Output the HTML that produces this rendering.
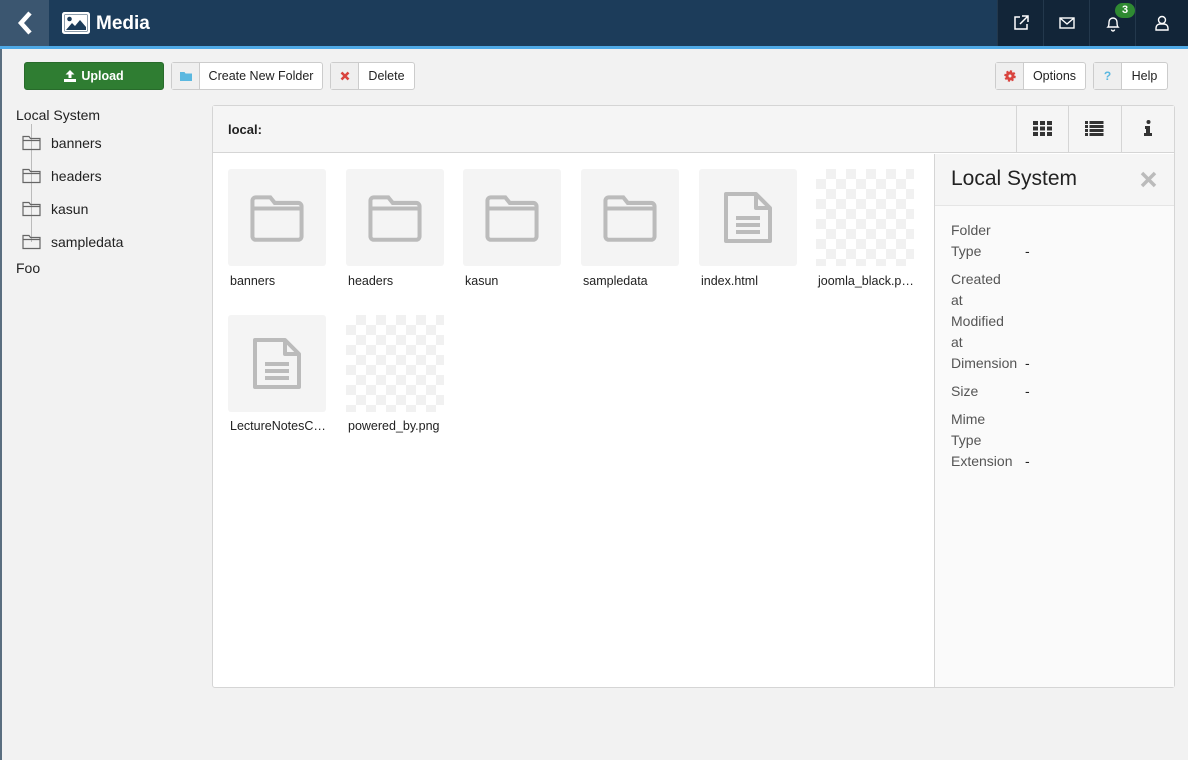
<!DOCTYPE html>
<html><head><meta charset="utf-8"><style>
*{box-sizing:border-box;margin:0;padding:0}
body{width:1188px;height:760px;background:#f2f2f2;font-family:"Liberation Sans",Arial,sans-serif;font-size:13px;color:#222;position:relative;overflow:hidden}
.abs{position:absolute}
#hdr{left:0;top:0;width:1188px;height:46px;background:#1c3c5a}
#line{left:0;top:46px;width:1188px;height:3px;background:#4ea9e6}
#back{left:0;top:0;width:49px;height:46px;background:#3b5670}
.ric{top:0;width:46px;height:46px;background:#122538;border-left:1px solid #23384c;display:flex;align-items:center;justify-content:center}
.btn{height:28px;border:1px solid #ccc;border-radius:3px;background:#fff;display:flex;align-items:stretch;font-size:12.5px}
.btn .ic{width:28px;background:#efefef;border-right:1px solid #ccc;display:flex;align-items:center;justify-content:center}
.btn .t{flex:1;display:flex;align-items:center;justify-content:center}
.tree{font-size:14px;color:#222}
.thumb{width:98px;height:97px;background:#f4f4f4;border-radius:3px;display:flex;align-items:center;justify-content:center}
.chk{background-color:#fff;background-image:linear-gradient(45deg,#f1f1f1 25%,transparent 25%,transparent 75%,#f1f1f1 75%),linear-gradient(45deg,#f1f1f1 25%,transparent 25%,transparent 75%,#f1f1f1 75%);background-size:20px 20px;background-position:0 0,10px 10px}
.lbl{font-size:12.5px;width:98px;white-space:nowrap;overflow:hidden;text-overflow:ellipsis;padding-left:2px}
.inf{font-size:14px;color:#555;line-height:21px}
.dash{color:#222}
</style></head><body>
<div id="hdr" class="abs"></div>
<div id="back" class="abs"><svg width="49" height="46"><path d="M30 13 L21 23 L30 33" stroke="#fff" stroke-width="4.5" fill="none"/></svg></div>
<svg class="abs" style="left:61px;top:11px" width="30" height="24"><rect x="1.5" y="1.5" width="27" height="21" rx="2" fill="#fff" stroke="#fff" stroke-width="1"/><rect x="3.5" y="3.5" width="23" height="17" fill="#1c3c5a"/><rect x="4" y="4" width="22" height="16" fill="#fff"/><circle cx="8.5" cy="8" r="2.3" fill="#1c3c5a"/><path d="M5 19 L11 12 L14 15 L19 9 L25 16 L25 19 Z" fill="#1c3c5a"/></svg>
<div class="abs" style="left:96px;top:13px;color:#fff;font-size:19px;font-weight:bold">Media</div>
<div class="ric abs" style="left:997px"><svg width="18" height="18" fill="none" stroke="#fff" stroke-width="1.5"><path d="M8 3H3v12h12v-5"/><path d="M10 2h6v6M16 2L8 10"/></svg></div>
<div class="ric abs" style="left:1043px"><svg width="18" height="16" fill="none" stroke="#fff" stroke-width="1.4"><rect x="2" y="3" width="14" height="10"/><path d="M2 3l7 6 7-6"/></svg></div>
<div class="ric abs" style="left:1089px"><svg width="18" height="18" fill="none" stroke="#fff" stroke-width="1.4"><path d="M4 13c1-1 1-3 1-5a4 4 0 018 0c0 2 0 4 1 5zM7.5 15.5a1.5 1.5 0 003 0"/></svg></div>
<div class="abs" style="left:1115px;top:3px;width:20px;height:15px;border-radius:8px;background:#2f8a32;color:#fff;font-size:11px;font-weight:bold;text-align:center;line-height:15px">3</div>
<div class="ric abs" style="left:1135px;width:53px"><svg width="18" height="18" fill="none" stroke="#fff" stroke-width="1.4"><circle cx="9" cy="6" r="3.5"/><path d="M3 16v-2a4 4 0 014-4h4a4 4 0 014 4v2z"/></svg></div>
<div id="line" class="abs"></div>

<div class="abs" style="left:24px;top:62px;width:140px;height:28px;background:#2f7d32;border:1px solid #286b2b;border-radius:3px;color:#fff;font-weight:bold;font-size:12.5px;display:flex;align-items:center;justify-content:center;gap:5px"><svg width="12" height="12" fill="#fff"><path d="M6 0L1.5 4.5h3V8h3V4.5h3zM0 9h12v3H0z"/></svg>Upload</div>
<div class="btn abs" style="left:171px;top:62px;width:152px"><div class="ic"><svg width="12" height="10"><path d="M0 1h4.5l1 1.5H12V10H0z" fill="#5bb8e0"/></svg></div><div class="t">Create New Folder</div></div>
<div class="btn abs" style="left:330px;top:62px;width:85px"><div class="ic"><svg width="10" height="10" stroke="#d9443f" stroke-width="2.6"><path d="M1.5 1.5l7 7M8.5 1.5l-7 7"/></svg></div><div class="t">Delete</div></div>
<div class="btn abs" style="left:995px;top:62px;width:91px"><div class="ic"><svg width="12" height="12"><circle cx="6" cy="6" r="4.5" fill="#d9443f" stroke="#d9443f" stroke-width="2.5" stroke-dasharray="2 1.5"/><circle cx="6" cy="6" r="1.5" fill="#efefef"/></svg></div><div class="t">Options</div></div>
<div class="btn abs" style="left:1093px;top:62px;width:75px"><div class="ic" style="color:#5bb8e0;font-weight:bold;font-size:12px">?</div><div class="t">Help</div></div>

<div class="abs" style="left:0;top:49px;width:2px;height:711px;background:#5a6e80"></div>
<div class="abs tree" style="left:16px;top:107px">Local System</div>
<div class="abs" style="left:31px;top:124px;width:1px;height:118px;background:#bbb"></div>
<svg class="abs" style="left:22px;top:134px" width="20" height="120" fill="none" stroke="#666" stroke-width="1.2">
<g id="f"><path d="M1 2.5h6l1.5 2H18v11H1z M1 6.5h17"/></g>
<use href="#f" y="33"/><use href="#f" y="66"/><use href="#f" y="99"/></svg>
<div class="abs tree" style="left:51px;top:135px">banners</div>
<div class="abs tree" style="left:51px;top:168px">headers</div>
<div class="abs tree" style="left:51px;top:201px">kasun</div>
<div class="abs tree" style="left:51px;top:234px">sampledata</div>
<div class="abs tree" style="left:16px;top:260px">Foo</div>

<div class="abs" style="left:212px;top:105px;width:963px;height:583px;background:#fff;border:1px solid #d5d5d5;border-radius:3px"></div>
<div class="abs" style="left:213px;top:106px;width:961px;height:47px;background:#f5f5f5;border-bottom:1px solid #d5d5d5"></div>
<div class="abs" style="left:228px;top:122px;font-weight:bold;font-size:13px">local:</div>
<div class="abs" style="left:1016px;top:106px;width:1px;height:47px;background:#d5d5d5"></div>
<div class="abs" style="left:1068px;top:106px;width:1px;height:47px;background:#d5d5d5"></div>
<div class="abs" style="left:1121px;top:106px;width:1px;height:47px;background:#d5d5d5"></div>
<svg class="abs" style="left:1033px;top:121px" width="19" height="15" fill="#333"><rect x="0" y="0" width="5" height="4"/><rect x="7" y="0" width="5" height="4"/><rect x="14" y="0" width="5" height="4"/><rect x="0" y="5.5" width="5" height="4"/><rect x="7" y="5.5" width="5" height="4"/><rect x="14" y="5.5" width="5" height="4"/><rect x="0" y="11" width="5" height="4"/><rect x="7" y="11" width="5" height="4"/><rect x="14" y="11" width="5" height="4"/></svg>
<svg class="abs" style="left:1085px;top:121px" width="19" height="15" fill="#333"><rect x="0" y="0" width="3" height="3"/><rect x="4.5" y="0" width="14" height="3"/><rect x="0" y="4" width="3" height="3"/><rect x="4.5" y="4" width="14" height="3"/><rect x="0" y="8" width="3" height="3"/><rect x="4.5" y="8" width="14" height="3"/><rect x="0" y="12" width="3" height="3"/><rect x="4.5" y="12" width="14" height="3"/></svg>
<svg class="abs" style="left:1144px;top:120px" width="8" height="16" fill="#333"><circle cx="4.5" cy="2" r="2"/><path d="M1 6h5v7h2v3H0v-3h2v-4H1z"/></svg>

<div class="abs" style="left:934px;top:154px;width:240px;height:533px;background:#fafafa;border-left:1px solid #d5d5d5"></div>
<div class="abs" style="left:935px;top:154px;width:239px;height:52px;background:#f5f5f5;border-bottom:1px solid #e5e5e5"></div>
<div class="abs" style="left:951px;top:167px;font-size:21px;color:#222">Local System</div>
<svg class="abs" style="left:1140px;top:171px" width="17" height="17" stroke="#bbb" stroke-width="3.5"><path d="M2 2l13 13M15 2L2 15"/></svg>
<div class="abs inf" style="left:951px;top:220px">Folder<br>Type</div><div class="abs inf dash" style="left:1025px;top:241px">-</div>
<div class="abs inf" style="left:951px;top:269px">Created<br>at<br>Modified<br>at<br>Dimension</div><div class="abs inf dash" style="left:1025px;top:353px">-</div>
<div class="abs inf" style="left:951px;top:381px">Size</div><div class="abs inf dash" style="left:1025px;top:381px">-</div>
<div class="abs inf" style="left:951px;top:409px">Mime<br>Type<br>Extension</div><div class="abs inf dash" style="left:1025px;top:451px">-</div>

<svg width="0" height="0" style="position:absolute"><defs>
<g id="fd"><path d="M4 6a3 3 0 013-3h13l4 5h21a3 3 0 013 3v27a3 3 0 01-3 3H7a3 3 0 01-3-3z" fill="none" stroke="#bbb" stroke-width="3.6"/><path d="M4 13h44" stroke="#bbb" stroke-width="3.6"/></g>
<g id="fl"><path d="M3 3h30l14 14v33H3z M33 3v14h14" fill="none" stroke="#bbb" stroke-width="4" stroke-linejoin="round"/><path d="M13 27h24M13 34h24M13 41h24" stroke="#bbb" stroke-width="4"/></g>
</defs></svg>
<div class="abs thumb" style="left:228px;top:169px"><svg width="60" height="48" viewBox="0 0 52 43"><use href="#fd"/></svg></div>
<div class="abs thumb" style="left:346px;top:169px"><svg width="60" height="48" viewBox="0 0 52 43"><use href="#fd"/></svg></div>
<div class="abs thumb" style="left:463px;top:169px"><svg width="60" height="48" viewBox="0 0 52 43"><use href="#fd"/></svg></div>
<div class="abs thumb" style="left:581px;top:169px"><svg width="60" height="48" viewBox="0 0 52 43"><use href="#fd"/></svg></div>
<div class="abs thumb" style="left:699px;top:169px"><svg width="52" height="53" viewBox="0 0 50 53"><use href="#fl"/></svg></div>
<div class="abs thumb chk" style="left:816px;top:169px;border-radius:0"></div>
<div class="abs thumb" style="left:228px;top:315px"><svg width="52" height="53" viewBox="0 0 50 53"><use href="#fl"/></svg></div>
<div class="abs thumb chk" style="left:346px;top:315px;border-radius:0"></div>
<div class="abs lbl" style="left:228px;top:274px">banners</div>
<div class="abs lbl" style="left:346px;top:274px">headers</div>
<div class="abs lbl" style="left:463px;top:274px">kasun</div>
<div class="abs lbl" style="left:581px;top:274px">sampledata</div>
<div class="abs lbl" style="left:699px;top:274px">index.html</div>
<div class="abs lbl" style="left:816px;top:274px">joomla_black.png</div>
<div class="abs lbl" style="left:228px;top:419px">LectureNotesCS.pdf</div>
<div class="abs lbl" style="left:346px;top:419px">powered_by.png</div>
</body></html>
